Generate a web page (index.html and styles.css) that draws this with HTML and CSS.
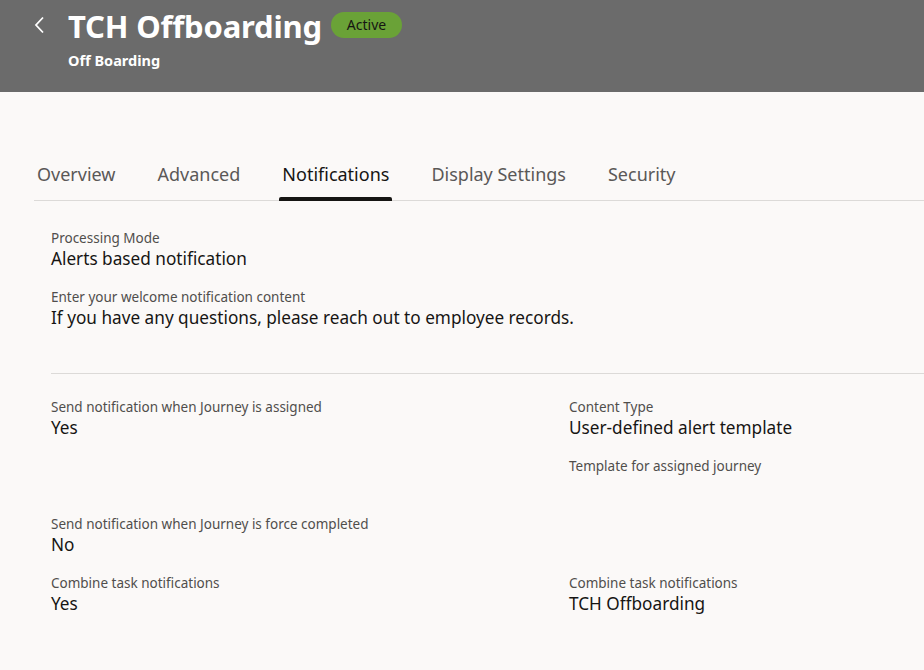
FILE: index.html
```html
<!DOCTYPE html>
<html>
<head>
<meta charset="utf-8">
<link rel="stylesheet" href="styles.css">
</head>
<body>
<header class="hdr">
  <div class="hdr-row">
    <span class="back"><svg width="12" height="18" viewBox="0 0 12 18"><path d="M10 1.5 L3 9 L10 16.5" fill="none" stroke="#fff" stroke-width="1.8"/></svg></span>
    <div class="hdr-text">
      <div class="title-line"><h1 class="title">TCH Offboarding</h1><span class="badge">Active</span></div>
      <div class="subtitle">Off Boarding</div>
    </div>
  </div>
</header>
<main class="main">
  <nav class="tabs">
    <span class="tab">Overview</span>
    <span class="tab">Advanced</span>
    <span class="tab active">Notifications</span>
    <span class="tab">Display Settings</span>
    <span class="tab">Security</span>
  </nav>
  <section class="content">
    <div class="field"><div class="label">Processing Mode</div><div class="value">Alerts based notification</div></div>
    <div class="field"><div class="label">Enter your welcome notification content</div><div class="value">If you have any questions, please reach out to employee records.</div></div>
    <hr class="sep">
    <div class="grid">
      <div class="cell">
        <div class="field"><div class="label">Send notification when Journey is assigned</div><div class="value">Yes</div></div>
      </div>
      <div class="cell">
        <div class="field"><div class="label">Content Type</div><div class="value">User-defined alert template</div></div>
        <div class="field tall"><div class="label">Template for assigned journey</div></div>
      </div>
      <div class="cell">
        <div class="field"><div class="label">Send notification when Journey is force completed</div><div class="value">No</div></div>
      </div>
      <div class="cell"></div>
      <div class="cell">
        <div class="field"><div class="label">Combine task notifications</div><div class="value">Yes</div></div>
      </div>
      <div class="cell">
        <div class="field"><div class="label">Combine task notifications</div><div class="value">TCH Offboarding</div></div>
      </div>
    </div>
  </section>
</main>
</body>
</html>
```
FILE: styles.css
```css
* { box-sizing: border-box; }
html, body { margin: 0; padding: 0; }
body {
  background: #fbf9f8;
  font-family: "Noto Sans", "Open Sans", sans-serif;
  color: #161513;
  width: 924px;
  height: 670px;
  overflow: hidden;
}
.hdr {
  background: #6b6b6b;
  height: 92px;
  color: #fff;
}
.hdr-row {
  display: flex;
  padding: 8px 0 0 33px;
}
.back { width: 35px; padding-top: 8px; }
.title-line { display: flex; align-items: center; gap: 9px; }
.title {
  margin: 0;
  font-size: 31px;
  font-weight: 700;
  line-height: 36px;
  letter-spacing: -0.2px;
}
.badge {
  background: #6aa237;
  color: #161513;
  font-size: 14px;
  line-height: 26px;
  padding: 0 16px;
  border-radius: 13px;
  margin-top: -2px;
}
.subtitle {
  font-size: 14.5px;
  font-weight: 700;
  margin-top: 6px;
}
.main { padding: 0 0 0 34px; }
.tabs {
  display: flex;
  gap: 36px;
  margin-top: 62px;
  border-bottom: 1px solid #dcdad8;
}
.tab {
  font-size: 18px;
  color: #5a5857;
  padding: 8px 3px 14px;
  line-height: 24px;
  position: relative;
}
.tab.active { color: #161513; }
.tab.active::after {
  content: "";
  position: absolute;
  left: 0; right: 0; bottom: -1px;
  height: 4px;
  background: #161513;
  border-radius: 2px 2px 0 0;
}
.content { padding: 28px 0 0 17px; }
.field { margin-bottom: 18px; }
.label { font-size: 13.5px; color: #504e4c; line-height: 18px; }
.value { font-size: 17.2px; line-height: 23px; }
.sep {
  border: 0;
  border-top: 1px solid #dcdad8;
  margin: 44px 0 24px;
}
.grid {
  display: grid;
  grid-template-columns: 518px 1fr;
}
.tall { margin-bottom: 40px; }
```
